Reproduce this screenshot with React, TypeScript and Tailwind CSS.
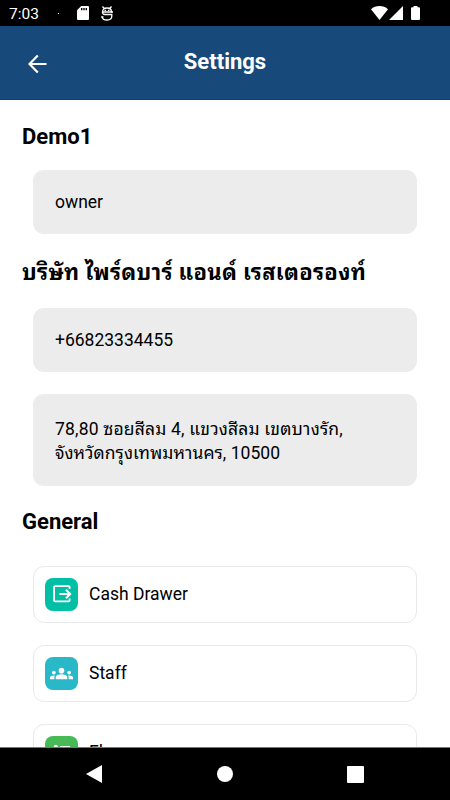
import type { ReactNode } from "react";

interface MenuItem {
  label: string;
  color: string;
  icon: ReactNode;
}

const MENU_ITEMS: MenuItem[] = [
  {
    label: "Cash Drawer",
    color: "bg-[#00bfa5]",
    icon: (
      <svg viewBox="0 0 20 20" className="size-5" fill="none" stroke="white" strokeWidth="1.8">
        <path d="M17.6 5V3a.9.9 0 0 0-.9-.9H3a.9.9 0 0 0-.9.9v13.5c0 .6.3.9.9.9h13.7c.6 0 .9-.3.9-.9V14.5" />
        <path d="M7.5 10H18M14 5.8l4.2 4.2-4.2 4.2" strokeWidth="2" />
      </svg>
    ),
  },
  {
    label: "Staff",
    color: "bg-[#28b8c8]",
    icon: (
      <svg viewBox="0 0 24 24" className="size-[23px]" fill="white">
        <path d="M12 12.75c1.63 0 3.07.39 4.24.9 1.08.48 1.76 1.56 1.76 2.73V18H6v-1.61c0-1.18.68-2.26 1.76-2.73 1.17-.52 2.61-.91 4.24-.91zM4 13c1.1 0 2-.9 2-2s-.9-2-2-2-2 .9-2 2 .9 2 2 2zm1.13 1.1c-.37-.06-.74-.1-1.13-.1-.99 0-1.93.21-2.78.58A2.01 2.01 0 0 0 0 16.43V18h4.5v-1.61c0-.83.23-1.61.63-2.29zM20 13c1.1 0 2-.9 2-2s-.9-2-2-2-2 .9-2 2 .9 2 2 2zm4 3.43c0-.81-.48-1.53-1.22-1.85A6.95 6.95 0 0 0 20 14c-.39 0-.76.04-1.13.1.4.68.63 1.46.63 2.29V18H24v-1.57zM12 6c1.66 0 3 1.34 3 3s-1.34 3-3 3-3-1.34-3-3 1.34-3 3-3z" />
      </svg>
    ),
  },
  {
    label: "Floor",
    color: "bg-[#48b957]",
    icon: (
      <svg viewBox="0 0 20 20" className="size-5" fill="white">
        <circle cx="3.8" cy="4.8" r="2" />
        <path d="M8 4h10v2H8zM8 9h10v2H8zM8 14h10v2H8zM2 9h3v2H2zM2 14h3v2H2z" />
      </svg>
    ),
  },
];

function StatusBar() {
  return (
    <div className="flex h-[26px] shrink-0 items-center bg-black text-white">
      <span className="ml-[9px] w-[30px] pt-0.5 text-[15.5px] leading-[26px]">7:03</span>
      <span className="ml-[19px] size-px bg-white" />
      {/* SD card */}
      <svg viewBox="0 0 12 14" className="ml-[18px] h-[14px] w-3">
        <path d="M4.2 0H11a1 1 0 0 1 1 1v12a1 1 0 0 1-1 1H1a1 1 0 0 1-1-1V4.2z" fill="white" />
        <path d="M4.7 2v2.2M7 2v2.2M9.3 2v2.2" stroke="black" strokeWidth="1.4" />
      </svg>
      {/* Debug robot */}
      <svg viewBox="0 0 12 15" className="ml-3 h-[15px] w-3" fill="none" stroke="white" strokeWidth="1.3">
        <path d="M1.5 6C1.5 3.2 3.3 2 6 2s4.5 1.2 4.5 4zM1.5.5l1.700 2M10.500.5 8.800 2.500" />
        <path d="M1.500 6c0 1.600.8 2.500 2.500 2.500h6.800V10c0 2.600-1.700 4-4.800 4s-4.800-1.200-4.800-3.200M0 10.800h2.500M10 6h2" />
        <path d="M3.500 4.300h1.600M6.900 4.300h1.600" />
      </svg>
      <div className="ml-auto flex items-center pr-[30px]">
        <svg viewBox="0 0 17 14" className="h-[14px] w-[17px]" fill="white">
          <path d="M0 3.3C4.5-1.1 12.5-1.1 17 3.3L8.5 14z" />
        </svg>
        <svg viewBox="0 0 14 14" className="ml-px size-[14px]" fill="white">
          <path d="M14 0v14H0z" />
        </svg>
        <svg viewBox="0 0 9 14" className="ml-2 h-[14px] w-[9px]" fill="white">
          <path d="M2.5 0h4v1.3H8a1 1 0 0 1 1 1V13a1 1 0 0 1-1 1H1a1 1 0 0 1-1-1V2.3a1 1 0 0 1 1-1h1.5z" />
        </svg>
      </div>
    </div>
  );
}

function Header() {
  return (
    <header className="grid h-[74px] shrink-0 grid-cols-[74px_1fr_74px] border-b border-[#0f4073] bg-[#17497b] text-white">
      <button type="button" aria-label="Back" className="flex items-center pt-[3px] pl-[27.5px]">
        <svg viewBox="0 0 20 20" className="size-5" fill="none" stroke="white" strokeWidth="2.2">
          <path d="M9.8 1.5 1.5 10l8.3 8.5M1.5 10h17" />
        </svg>
      </button>
      <h1 className="pt-[22px] text-center text-[22px] leading-7 font-bold">Settings</h1>
    </header>
  );
}

function SectionTitle({ children }: { children: ReactNode }) {
  return <h2 className="ml-[22px] h-[30px] text-[22px] leading-[30px] font-bold whitespace-nowrap">{children}</h2>;
}

function InfoBox({ children }: { children: ReactNode }) {
  return (
    <div className="mx-[33px] rounded-[11px] bg-[#ececec] px-[22px] pt-5 pb-[20.5px] text-[17.5px] leading-6 whitespace-nowrap">
      {children}
    </div>
  );
}

function MenuRow({ label, color, icon }: MenuItem) {
  return (
    <button
      type="button"
      className="mx-[33px] flex h-[57px] shrink-0 items-center rounded-[11px] border border-[#e9e9e9] pl-[11px] text-left text-[17.5px]"
    >
      <span className={`flex size-[33px] items-center justify-center rounded-[8px] ${color}`}>{icon}</span>
      <span className="ml-[11px] pt-px">{label}</span>
    </button>
  );
}

function NavigationBar() {
  return (
    <nav className="flex h-[53px] shrink-0 items-center justify-between border-t border-[#777] bg-black px-[86px]">
      <svg viewBox="0 0 16 18" className="h-[18px] w-4" fill="white">
        <path d="M16 0v18L0 9z" />
      </svg>
      <span className="size-4 rounded-full bg-white" />
      <span className="size-[17px] rounded-[1px] bg-white" />
    </nav>
  );
}

export default function App() {
  return (
    <div className="flex h-[800px] w-[450px] flex-col overflow-hidden bg-white font-['Roboto','Noto_Sans_Thai_Looped','Loma','Waree','Garuda','Noto_Sans_Thai','Noto_Sans',sans-serif] text-black">
      <StatusBar />
      <Header />
      <main className="flex min-h-0 flex-1 flex-col overflow-hidden pt-[22px]">
        <SectionTitle>Demo1</SectionTitle>
        <div className="mt-[17.5px]">
          <InfoBox>owner</InfoBox>
        </div>
        <div className="mt-[23.5px]">
          <SectionTitle>
            <span className="tracking-[0.3px]">บริษัท ไพร์ดบาร์ แอนด์ เรสเตอรองท์</span>
          </SectionTitle>
        </div>
        <div className="mt-5 flex flex-col gap-[22px]">
          <InfoBox>+66823334455</InfoBox>
          <InfoBox>
            <div className="pt-[3px]">
              <p className="tracking-[0.18px]">78,80 ซอยสีลม 4, แขวงสีลม เขตบางรัก,</p>
              <p className="tracking-[0.03px]">จังหวัดกรุงเทพมหานคร, 10500</p>
            </div>
          </InfoBox>
        </div>
        <div className="mt-[21px]">
          <SectionTitle>General</SectionTitle>
        </div>
        <div className="mt-[29px] flex flex-col gap-[22px]">
          {MENU_ITEMS.map((item) => (
            <MenuRow key={item.label} {...item} />
          ))}
        </div>
      </main>
      <NavigationBar />
    </div>
  );
}
